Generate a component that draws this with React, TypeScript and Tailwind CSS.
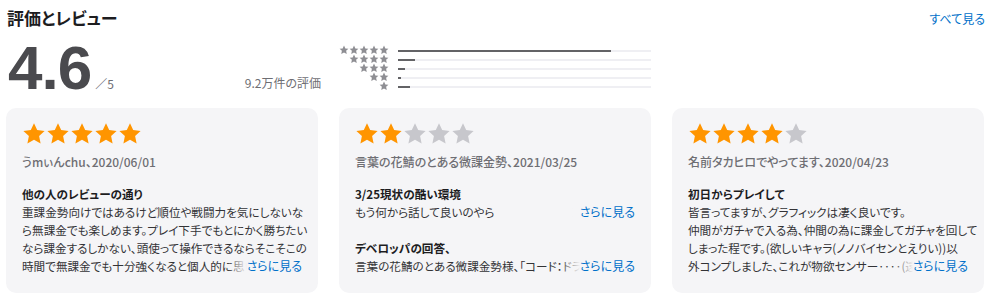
import React from "react";

const STAR = "M12 1.2l3.2 6.9 7.4.8-5.5 5.1 1.5 7.4L12 17.7l-6.6 3.7 1.5-7.4-5.5-5.1 7.4-.8z";

function Star({ size, color }: { size: number; color: string }) {
  return (
    <svg width={size} height={size} viewBox="0 0 24 24" className="block shrink-0">
      <path d={STAR} fill={color} />
    </svg>
  );
}

function Stars({ n }: { n: number }) {
  return (
    <div className="flex">
      {[0, 1, 2, 3, 4].map((i) => (
        <Star key={i} size={24} color={i < n ? "#ff9500" : "#c7c7cc"} />
      ))}
    </div>
  );
}

function MoreLine({ text }: { text: string }) {
  return (
    <div className="relative whitespace-nowrap overflow-hidden">
      <span>{text}</span>
      <div className="absolute right-0 top-0 h-full flex text-[12px]">
        <div className="w-[20px] h-full bg-linear-to-r from-[rgba(245,245,247,0)] to-[#f5f5f7]" />
        <span className="bg-[#f5f5f7] text-[#0070c9]">さらに見る</span>
      </div>
    </div>
  );
}

function Card({ n, name, children }: { n: number; name: string; children: React.ReactNode }) {
  return (
    <div className="h-[185px] rounded-[10px] bg-[#f5f5f7] px-[16px] pt-[14px] text-[12px] leading-[18px]">
      <Stars n={n} />
      <div className="mt-[7px] font-medium text-[#6e6e73]">{name}</div>
      <div className="mt-[14px] text-[11.6px] text-[#333336]">{children}</div>
    </div>
  );
}

const hist = [0.84, 0.067, 0.028, 0.01, 0.047];

export default function App() {
  return (
    <div
      className="w-[997px] h-[298px] bg-white px-[6px] pt-[6px] [font-feature-settings:'palt'] overflow-hidden"
      style={{ fontFamily: "'Noto Sans CJK JP', 'Noto Sans', sans-serif" }}
    >
      <div className="flex items-center justify-between w-[979px]">
        <h2 className="text-[17px] leading-[24px] font-bold text-[#1d1d1f] pl-[1px]">評価とレビュー</h2>
        <a className="text-[12px] leading-[18px] text-[#0070c9] mt-[2px]">すべて見る</a>
      </div>
      <div className="mt-[7px] h-[71px] grid grid-cols-[312px_312px_312px] gap-x-[21px]">
        <div className="flex items-start justify-between">
          <div className="flex items-baseline">
            <span
              className="text-[62px] leading-[62px] font-bold text-[#4a4a4e] tracking-[-1px] pl-[2px]"
              style={{ fontFamily: "'Liberation Sans', Arial, sans-serif" }}
            >
              4.6
            </span>
            <span className="ml-[4px] text-[12px] text-[#6e6e73]">／5</span>
          </div>
          <span className="mt-[37px] mr-[-3px] text-[12px] leading-[18px] text-[#6e6e73]">9.2万件の評価</span>
        </div>
        <div className="mt-[8px] flex flex-col">
          {hist.map((f, i) => (
            <div key={i} className="h-[9px] flex items-center">
              <div className="w-[50px] flex justify-end">
                {Array.from({ length: 5 - i }).map((_, j) => (
                  <Star key={j} size={10} color="#8e8e93" />
                ))}
              </div>
              <div className="ml-[9px] flex-1 h-[2px] mt-[2px] bg-[#efeff3]">
                <div className="h-full bg-[#636366]" style={{ width: `${f * 100}%` }} />
              </div>
            </div>
          ))}
        </div>
        <div />
      </div>
      <div className="grid grid-cols-[312px_312px_312px] gap-x-[21px]">
        <Card n={5} name="うmぃんchu、2020/06/01">
          <div className="font-bold text-[#1d1d1f]">他の人のレビューの通り</div>
          <div className="whitespace-nowrap">重課金勢向けではあるけど順位や戦闘力を気にしないな</div>
          <div className="whitespace-nowrap">ら無課金でも楽しめます。プレイ下手でもとにかく勝ちたい</div>
          <div className="whitespace-nowrap">なら課金するしかない、頭使って操作できるならそこそこの</div>
          <MoreLine text="時間で無課金でも十分強くなると個人的に思います。" />
        </Card>
        <Card n={2} name="言葉の花鯖のとある微課金勢、2021/03/25">
          <div className="font-bold text-[#1d1d1f]">3/25現状の酷い環境</div>
          <MoreLine text="もう何から話して良いのやら" />
          <div className="mt-[18px] font-bold text-[#1d1d1f]">デベロッパの回答、</div>
          <MoreLine text="言葉の花鯖のとある微課金勢様、「コード：ドラゴンブラッド」" />
        </Card>
        <Card n={4} name="名前タカヒロでやってます、2020/04/23">
          <div className="font-bold text-[#1d1d1f]">初日からプレイして</div>
          <div className="whitespace-nowrap">皆言ってますが、グラフィックは凄く良いです。</div>
          <div className="whitespace-nowrap">仲間がガチャで入る為、仲間の為に課金してガチャを回して</div>
          <div className="whitespace-nowrap">しまった程です。(欲しいキャラ(ノノバイセンとえりい))以</div>
          <MoreLine text="外コンプしました、これが物欲センサー‥‥(遠い目)" />
        </Card>
      </div>
    </div>
  );
}
